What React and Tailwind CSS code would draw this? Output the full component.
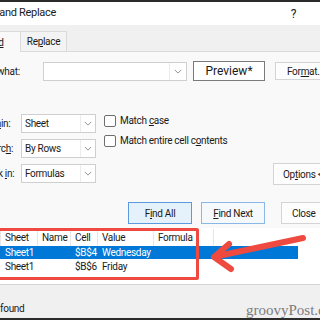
import React from 'react';

const FONT = { fontFamily: 'Roboto, "Noto Sans", sans-serif' };

function Chevron() {
  return (
    <svg viewBox="0 0 10 6" className="w-[8px] h-[5px]" fill="none" stroke="#7a7a7a" strokeWidth={1}>
      <path d="M1 1l4 4 4-4" />
    </svg>
  );
}

function Combo({ value }) {
  return (
    <div className="w-[75px] h-[19px] bg-white border border-[#cfcfcf] flex items-center">
      <span className="flex-1 pl-[3px]">{value}</span>
      <div className="w-[15px] h-full border-l border-[#ececec] flex items-center justify-center">
        <Chevron />
      </div>
    </div>
  );
}

function Check({ children }) {
  return (
    <div className="flex items-center h-[13px]">
      <div className="w-[12px] h-[12px] border border-[#6e6e6e] rounded-[2px] bg-white" />
      <span className="ml-[4px]">{children}</span>
    </div>
  );
}

const COLS = [
  { label: 'Book', w: 'w-[41px]' },
  { label: 'Sheet', w: 'w-[37px]' },
  { label: 'Name', w: 'w-[33px]' },
  { label: 'Cell', w: 'w-[27px]' },
  { label: 'Value', w: 'w-[56px]' },
  { label: 'Formula', w: 'w-[60px]' },
];

const ROWS = [
  ['Book1', 'Sheet1', '', '$B$4', 'Wednesday', ''],
  ['Book1', 'Sheet1', '', '$B$6', 'Friday', ''],
];

export default function App() {
  return (
    <div className="relative w-[320px] h-[320px] overflow-hidden bg-[#f9f9f9] text-[10px] tracking-[-0.3px] text-[#1a1a1a]" style={FONT}>
      <div className="ml-[-40px] w-[400px] flex flex-col h-full">
        <div className="h-[2px] bg-[#2b2b2b]" />

        {/* title bar */}
        <div className="h-[23px] bg-white flex items-center text-[11px]">
          <span className="ml-[17px]">Find and Replace</span>
          <span className="ml-auto mr-[64px] text-[12px]">?</span>
        </div>

        {/* tabs */}
        <div className="h-[27px] bg-[#f0f0f0] flex items-end border-b border-[#dadada]">
          <div className="ml-[8px] w-[53px] h-[21px] -mb-px bg-[#f9f9f9] border border-b-0 border-[#dadada] flex items-center justify-center">
            Fin<span className="underline">d</span>
          </div>
          <div className="w-[46px] h-[20px] bg-[#f3f3f3] border border-b-0 border-l-0 border-[#dadada] flex items-center justify-center">
            Re<span className="underline">p</span>lace
          </div>
        </div>

        {/* find what */}
        <div className="flex items-center h-[20px] mt-[9px]">
          <span className="w-[83px] pl-[17px]">Fi<span className="underline">n</span>d what:</span>
          <div className="w-[144px] h-[19px] bg-white border border-[#cfcfcf] flex items-center justify-end">
            <div className="w-[17px] h-full border-l border-[#ececec] flex items-center justify-center">
              <Chevron />
            </div>
          </div>
          <div className="ml-[6px] w-[72px] h-[20px] bg-white border border-[#7a7a7a] flex items-center justify-center text-[12px] tracking-normal">
            Preview*
          </div>
          <div className="ml-[10px] w-[66px] h-[18px] bg-[#fdfdfd] border border-[#d4d4d4] flex items-center pl-[11px]">
            For<span className="underline">m</span>at...
          </div>
        </div>

        {/* options */}
        <div className="flex mt-[33px]">
          <div className="flex flex-col gap-[6px]">
            {[['Wit', 'h', 'in:', 'Sheet'], ['Searc', 'h', ':', 'By Rows'], ['Look ', 'i', 'n:', 'Formulas']].map(([a, u, b, v]) => (
              <div key={v} className="flex items-center">
                <span className="w-[61px] pl-[22px]">{a}<span className="underline">{u}</span>{b}</span>
                <Combo value={v} />
              </div>
            ))}
          </div>
          <div className="ml-[8px] flex flex-col gap-[7px]">
            <Check>Match <span className="underline">c</span>ase</Check>
            <Check>Match entire cell c<span className="underline">o</span>ntents</Check>
          </div>
          <div className="ml-auto mr-[17px] self-end -mb-[2px] w-[70px] h-[22px] bg-[#fdfdfd] border border-[#d4d4d4] flex items-center pl-[9px]">
            Op<span className="underline">t</span>ions &lt;&lt;
          </div>
        </div>

        {/* buttons */}
        <div className="flex mt-[19px] h-[22px]">
          <div className="ml-[168px] w-[64px] bg-[#e5f1fb] border border-[#5a9be0] flex items-center justify-center">
            F<span className="underline">i</span>nd All
          </div>
          <div className="ml-[9px] w-[64px] bg-[#f6f9fc] border border-[#8ab8e6] flex items-center justify-center">
            <span className="underline">F</span>ind Next
          </div>
          <div className="ml-[16px] w-[64px] bg-[#fdfdfd] border border-[#d4d4d4] flex items-center pl-[10px]">
            Close
          </div>
        </div>

        {/* results */}
        <div className="mt-[4px] h-[57px] bg-white border-b border-[#d4d4d4] pt-[1px]">
          <div className="flex h-[17px] items-center">
            {COLS.map(c => (
              <div key={c.label} className={`${c.w} h-full pl-[4px] border-r border-[#e6e6e6] flex items-center`}>{c.label}</div>
            ))}
          </div>
          {ROWS.map((r, i) => (
            <div key={i} className={`flex w-[338px] ${i === 0 ? 'h-[13px] bg-[#0078d7] text-white' : 'h-[15px]'}`}>
              {r.map((cell, j) => (
                <div key={j} className={`${COLS[j].w} pl-[4px] flex items-center`}>{cell}</div>
              ))}
            </div>
          ))}
        </div>

        {/* status */}
        <div className="flex-1 bg-[#f0f0f0] flex items-end pb-[2px]">
          <span className="pl-[5px]">2 cell(s) found</span>
        </div>
        <div className="h-[2px] bg-[#2b2b2b]" />
      </div>

      {/* annotation */}
      <div className="absolute left-[-10px] top-[228px] w-[209px] h-[52px] border-[3px] border-[#ee4a3f] rounded-[2px]" />
      <svg className="absolute inset-0 pointer-events-none" width="320" height="320" viewBox="0 0 320 320" fill="none" stroke="#ee4a3f" strokeWidth={6} strokeLinecap="round" strokeLinejoin="round">
        <path d="M303 238L218 256" />
        <path d="M229 244L214 257L231 269" />
      </svg>
      <span className="absolute left-[246px] top-[299px] text-[15px] tracking-normal text-[#7c7c7c]" style={{ fontFamily: '"Liberation Serif", serif' }}>
        groovyPost.com
      </span>
    </div>
  );
}
